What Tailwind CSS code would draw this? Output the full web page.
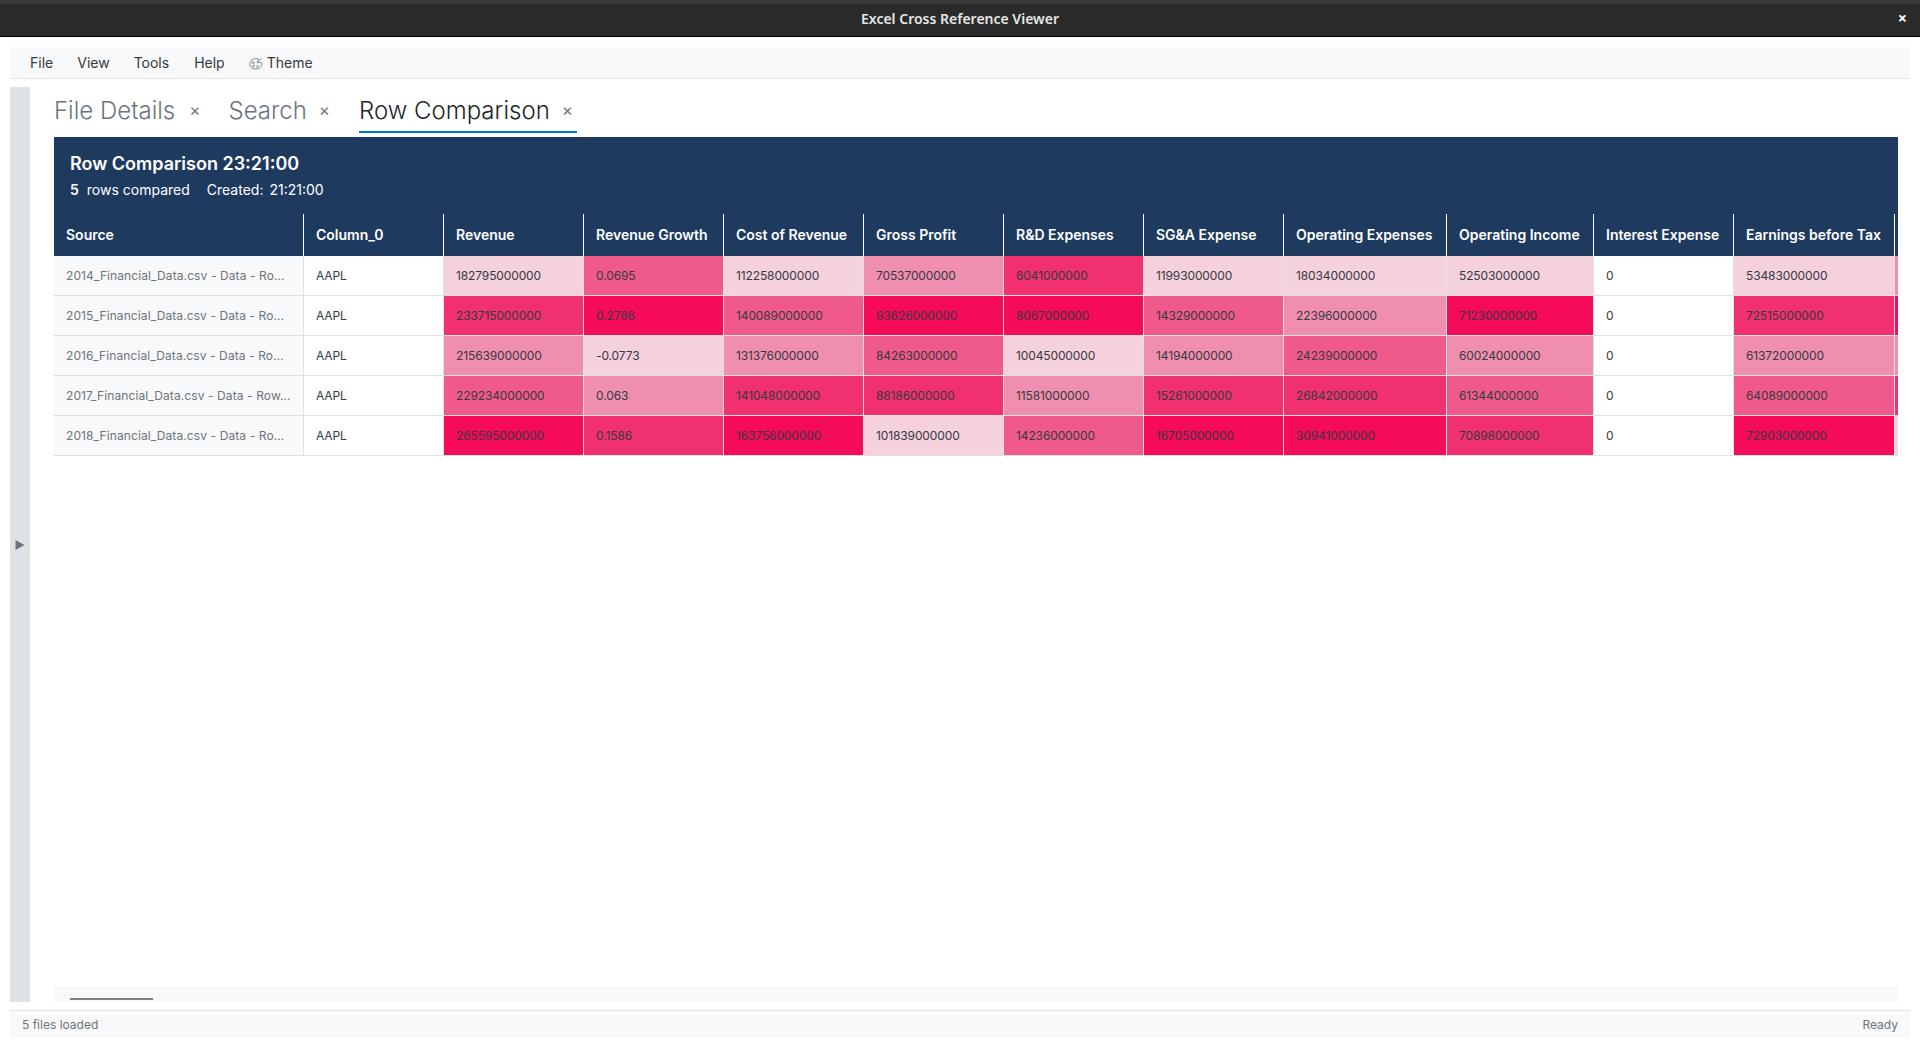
<!DOCTYPE html>
<html>
<head>
<meta charset="utf-8">
<script src="https://cdn.jsdelivr.net/npm/@tailwindcss/browser@4"></script>
</head>
<body class="bg-white font-['Inter',sans-serif]">
<div class="flex h-[1048px] w-[1920px] flex-col overflow-hidden">
  <header class="relative flex h-[37px] shrink-0 items-center justify-center border-b border-black bg-gradient-to-b from-[#3a3a3a] from-[2px] to-[#2a2a2a] to-[6px] font-['Noto_Sans',sans-serif] text-[14px] font-semibold text-[#e6e6e6]">
    Excel Cross Reference Viewer
    <span class="absolute right-[13px] top-[9px] text-[16px] leading-[18px] font-bold text-white">×</span>
  </header>
  <div class="flex min-h-0 flex-1 flex-col px-[10px] pt-[10px] pb-[10px]">
    <nav class="flex h-[32px] shrink-0 items-center gap-[24px] border-b border-[#dee2e6] bg-[#f8f9fa] pl-[20px] text-[14px] text-[#343a40]">
      <span>File</span><span>View</span><span>Tools</span><span class="ml-[1px]">Help</span>
      <span class="flex items-center gap-[4px]">
        <svg class="mt-[2px]" width="14" height="13" viewBox="0 0 14 13" fill="none" stroke="#868e96" stroke-width="1"><path d="M2 3.5C4 1.5 8 1 10 2.2L8 5.5C9 6 10.5 6 12.5 5.2C13.5 7.5 12.5 10.5 9.5 11.6C6.5 12.6 2.5 12 1.2 9.5C0.5 7.5 0.8 5 2 3.5Z"/><circle cx="4" cy="5.5" r="1"/><circle cx="4.5" cy="9" r="1"/><circle cx="8.5" cy="9.5" r="1"/><path d="M8 5.5L13 1.2"/></svg>
        <span>Theme</span>
      </span>
    </nav>
    <div class="flex min-h-0 flex-1 pt-[8px]">
      <aside class="flex h-[915px] w-[20px] shrink-0 items-center justify-center bg-[#dee2e6]">
        <svg width="10" height="12" viewBox="0 0 10 12"><path d="M0.5 1 L9.5 6 L0.5 11 Z" fill="#6c757d"/></svg>
      </aside>
      <main class="flex h-[915px] w-[1868px] flex-col pl-[24px]">
        <div class="flex h-[50px] shrink-0 items-start text-[24px] font-light">
          <div class="flex h-[46px] items-center border-b-2 border-transparent pt-[4px] text-[#6c757d]"><span>File Details</span><span class="ml-[14px] text-[17px] font-normal">×</span></div>
          <div class="ml-[28px] flex h-[46px] items-center border-b-2 border-transparent pt-[4px] text-[#6c757d]"><span>Search</span><span class="ml-[12px] text-[17px] font-normal">×</span></div>
          <div class="ml-[29px] flex h-[46px] items-center border-b-2 border-[#0078d4] pt-[4px] pr-[4px] text-[#212529]"><span>Row Comparison</span><span class="ml-[12px] text-[17px] font-normal text-[#6c757d]">×</span></div>
        </div>
        <section class="flex h-[77px] shrink-0 flex-col bg-[#1e3a5f] px-[16px] pt-[13px] text-white">
          <div class="text-[18px] leading-[27px] font-semibold">Row Comparison 23:21:00</div>
          <div class="mt-[2px] flex text-[14px] leading-[21px]"><span class="font-semibold">5</span><span class="ml-[8px]">rows compared</span><span class="ml-[17px]">Created:</span><span class="ml-[6px]">21:21:00</span></div>
        </section>
        <div class="w-full shrink-0 overflow-hidden">
          <table class="w-[1981px] table-fixed border-separate border-spacing-0 text-[12px] tracking-[-0.12px] text-[#343a40]">
            <colgroup>
              <col class="w-[250px]"><col class="w-[140px]"><col class="w-[140px]"><col class="w-[140px]"><col class="w-[140px]"><col class="w-[140px]"><col class="w-[140px]"><col class="w-[140px]"><col class="w-[163px]"><col class="w-[147px]"><col class="w-[140px]"><col class="w-[161px]"><col class="w-[140px]">
            </colgroup>
            <thead class="bg-[#1e3a5f] text-left text-[14px] tracking-normal text-white">
              <tr class="h-[42px]">
                <th class="border-r border-white px-[12px] pb-[2px] font-semibold">Source</th>
                <th class="border-r border-white px-[12px] pb-[2px] font-semibold">Column_0</th>
                <th class="border-r border-white px-[12px] pb-[2px] font-semibold">Revenue</th>
                <th class="border-r border-white px-[12px] pb-[2px] font-semibold">Revenue Growth</th>
                <th class="border-r border-white px-[12px] pb-[2px] font-semibold">Cost of Revenue</th>
                <th class="border-r border-white px-[12px] pb-[2px] font-semibold">Gross Profit</th>
                <th class="border-r border-white px-[12px] pb-[2px] font-semibold">R&amp;D Expenses</th>
                <th class="border-r border-white px-[12px] pb-[2px] font-semibold">SG&amp;A Expense</th>
                <th class="border-r border-white px-[12px] pb-[2px] font-semibold">Operating Expenses</th>
                <th class="border-r border-white px-[12px] pb-[2px] font-semibold">Operating Income</th>
                <th class="border-r border-white px-[12px] pb-[2px] font-semibold">Interest Expense</th>
                <th class="border-r border-white px-[12px] pb-[2px] font-semibold">Earnings before Tax</th>
                <th class="px-[12px] font-semibold"></th>
              </tr>
            </thead>
            <tbody>
              <tr class="h-[40px]">
                <td class="border-r border-b border-[#dee2e6] bg-[#f8f9fa] px-[12px] tracking-[0.1px] whitespace-nowrap text-[#6c757d]">2014_Financial_Data.csv - Data - Ro…</td>
                <td class="border-r border-b border-[#dee2e6] bg-white px-[12px]">AAPL</td>
                <td class="border-r border-b border-[#dee2e6] bg-[#f5d0dd] px-[12px]">182795000000</td>
                <td class="border-r border-b border-[#dee2e6] bg-[#f05a8a] px-[12px]">0.0695</td>
                <td class="border-r border-b border-[#dee2e6] bg-[#f5d0dd] px-[12px]">112258000000</td>
                <td class="border-r border-b border-[#dee2e6] bg-[#f08eb0] px-[12px]">70537000000</td>
                <td class="border-r border-b border-[#dee2e6] bg-[#f13070] px-[12px]">6041000000</td>
                <td class="border-r border-b border-[#dee2e6] bg-[#f5d0dd] px-[12px]">11993000000</td>
                <td class="border-r border-b border-[#dee2e6] bg-[#f5d0dd] px-[12px]">18034000000</td>
                <td class="border-r border-b border-[#dee2e6] bg-[#f5d0dd] px-[12px]">52503000000</td>
                <td class="border-r border-b border-[#dee2e6] bg-white px-[12px]">0</td>
                <td class="border-r border-b border-[#dee2e6] bg-[#f5d0dd] px-[12px]">53483000000</td>
                <td class="border-r border-b border-[#dee2e6] bg-[#f08eb0] px-[12px]"></td>
              </tr>
              <tr class="h-[40px]">
                <td class="border-r border-b border-[#dee2e6] bg-[#f8f9fa] px-[12px] tracking-[0.1px] whitespace-nowrap text-[#6c757d]">2015_Financial_Data.csv - Data - Ro…</td>
                <td class="border-r border-b border-[#dee2e6] bg-white px-[12px]">AAPL</td>
                <td class="border-r border-b border-[#dee2e6] bg-[#f13070] px-[12px]">233715000000</td>
                <td class="border-r border-b border-[#dee2e6] bg-[#f50b5a] px-[12px]">0.2786</td>
                <td class="border-r border-b border-[#dee2e6] bg-[#f05a8a] px-[12px]">140089000000</td>
                <td class="border-r border-b border-[#dee2e6] bg-[#f50b5a] px-[12px]">93626000000</td>
                <td class="border-r border-b border-[#dee2e6] bg-[#f50b5a] px-[12px]">8067000000</td>
                <td class="border-r border-b border-[#dee2e6] bg-[#f05a8a] px-[12px]">14329000000</td>
                <td class="border-r border-b border-[#dee2e6] bg-[#f08eb0] px-[12px]">22396000000</td>
                <td class="border-r border-b border-[#dee2e6] bg-[#f50b5a] px-[12px]">71230000000</td>
                <td class="border-r border-b border-[#dee2e6] bg-white px-[12px]">0</td>
                <td class="border-r border-b border-[#dee2e6] bg-[#f13070] px-[12px]">72515000000</td>
                <td class="border-r border-b border-[#dee2e6] bg-[#f50b5a] px-[12px]"></td>
              </tr>
              <tr class="h-[40px]">
                <td class="border-r border-b border-[#dee2e6] bg-[#f8f9fa] px-[12px] tracking-[0.1px] whitespace-nowrap text-[#6c757d]">2016_Financial_Data.csv - Data - Ro…</td>
                <td class="border-r border-b border-[#dee2e6] bg-white px-[12px]">AAPL</td>
                <td class="border-r border-b border-[#dee2e6] bg-[#f08eb0] px-[12px]">215639000000</td>
                <td class="border-r border-b border-[#dee2e6] bg-[#f5d0dd] px-[12px]">-0.0773</td>
                <td class="border-r border-b border-[#dee2e6] bg-[#f08eb0] px-[12px]">131376000000</td>
                <td class="border-r border-b border-[#dee2e6] bg-[#f05a8a] px-[12px]">84263000000</td>
                <td class="border-r border-b border-[#dee2e6] bg-[#f5d0dd] px-[12px]">10045000000</td>
                <td class="border-r border-b border-[#dee2e6] bg-[#f08eb0] px-[12px]">14194000000</td>
                <td class="border-r border-b border-[#dee2e6] bg-[#f05a8a] px-[12px]">24239000000</td>
                <td class="border-r border-b border-[#dee2e6] bg-[#f08eb0] px-[12px]">60024000000</td>
                <td class="border-r border-b border-[#dee2e6] bg-white px-[12px]">0</td>
                <td class="border-r border-b border-[#dee2e6] bg-[#f08eb0] px-[12px]">61372000000</td>
                <td class="border-r border-b border-[#dee2e6] bg-[#f08eb0] px-[12px]"></td>
              </tr>
              <tr class="h-[40px]">
                <td class="border-r border-b border-[#dee2e6] bg-[#f8f9fa] px-[12px] tracking-[0.1px] whitespace-nowrap text-[#6c757d]">2017_Financial_Data.csv - Data - Row…</td>
                <td class="border-r border-b border-[#dee2e6] bg-white px-[12px]">AAPL</td>
                <td class="border-r border-b border-[#dee2e6] bg-[#f05a8a] px-[12px]">229234000000</td>
                <td class="border-r border-b border-[#dee2e6] bg-[#f08eb0] px-[12px]">0.063</td>
                <td class="border-r border-b border-[#dee2e6] bg-[#f13070] px-[12px]">141048000000</td>
                <td class="border-r border-b border-[#dee2e6] bg-[#f13070] px-[12px]">88186000000</td>
                <td class="border-r border-b border-[#dee2e6] bg-[#f08eb0] px-[12px]">11581000000</td>
                <td class="border-r border-b border-[#dee2e6] bg-[#f13070] px-[12px]">15261000000</td>
                <td class="border-r border-b border-[#dee2e6] bg-[#f13070] px-[12px]">26842000000</td>
                <td class="border-r border-b border-[#dee2e6] bg-[#f05a8a] px-[12px]">61344000000</td>
                <td class="border-r border-b border-[#dee2e6] bg-white px-[12px]">0</td>
                <td class="border-r border-b border-[#dee2e6] bg-[#f05a8a] px-[12px]">64089000000</td>
                <td class="border-r border-b border-[#dee2e6] bg-[#f13070] px-[12px]"></td>
              </tr>
              <tr class="h-[40px]">
                <td class="border-r border-b border-[#dee2e6] bg-[#f8f9fa] px-[12px] tracking-[0.1px] whitespace-nowrap text-[#6c757d]">2018_Financial_Data.csv - Data - Ro…</td>
                <td class="border-r border-b border-[#dee2e6] bg-white px-[12px]">AAPL</td>
                <td class="border-r border-b border-[#dee2e6] bg-[#f50b5a] px-[12px]">265595000000</td>
                <td class="border-r border-b border-[#dee2e6] bg-[#f13070] px-[12px]">0.1586</td>
                <td class="border-r border-b border-[#dee2e6] bg-[#f50b5a] px-[12px]">163756000000</td>
                <td class="border-r border-b border-[#dee2e6] bg-[#f5d0dd] px-[12px]">101839000000</td>
                <td class="border-r border-b border-[#dee2e6] bg-[#f05a8a] px-[12px]">14236000000</td>
                <td class="border-r border-b border-[#dee2e6] bg-[#f50b5a] px-[12px]">16705000000</td>
                <td class="border-r border-b border-[#dee2e6] bg-[#f50b5a] px-[12px]">30941000000</td>
                <td class="border-r border-b border-[#dee2e6] bg-[#f13070] px-[12px]">70898000000</td>
                <td class="border-r border-b border-[#dee2e6] bg-white px-[12px]">0</td>
                <td class="border-r border-b border-[#dee2e6] bg-[#f50b5a] px-[12px]">72903000000</td>
                <td class="border-r border-b border-[#dee2e6] bg-[#f5d0dd] px-[12px]"></td>
              </tr>
            </tbody>
          </table>
        </div>
        <div class="min-h-0 flex-1"></div>
        <div class="flex h-[16px] shrink-0 items-end bg-[#f8f9fa] pb-[2px] pl-[16px]"><div class="h-[2px] w-[83px] bg-[#808080]"></div></div>
      </main>
    </div>
    <footer class="mt-[8px] flex h-[28px] shrink-0 items-center justify-between border-t border-[#dee2e6] bg-[#f8f9fa] px-[12px] text-[12px] text-[#6c757d]">
      <span>5 files loaded</span><span>Ready</span>
    </footer>
  </div>
</div>
</body>
</html>
